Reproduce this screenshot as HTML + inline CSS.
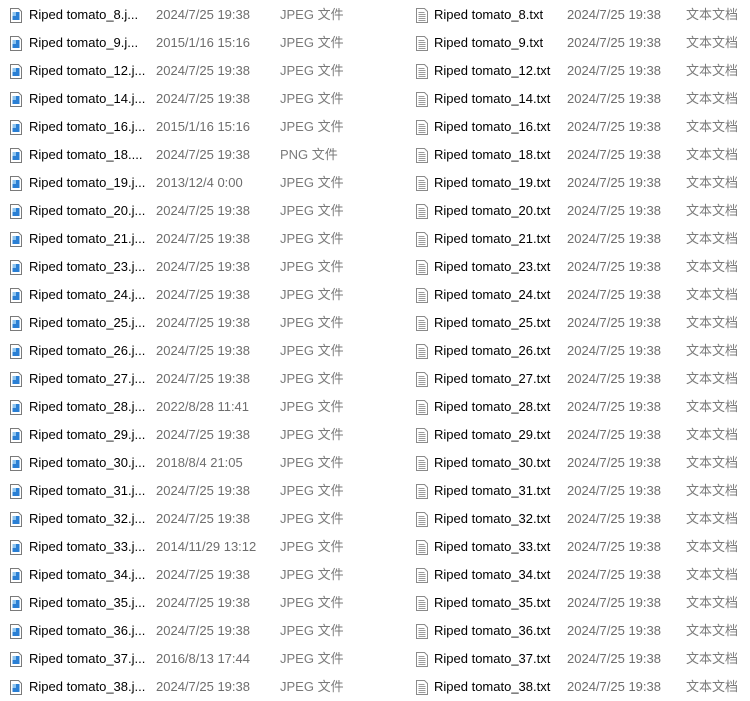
<!DOCTYPE html><html><head><meta charset="utf-8"><style>
body{margin:0;width:750px;height:699px;background:#fff;overflow:hidden;font-family:"Liberation Sans","Noto Sans CJK SC",sans-serif;font-size:13px;position:relative}
.r{position:absolute;left:0;width:750px;height:28px;line-height:28px}
.r span{position:absolute;top:0;white-space:nowrap}
.n{color:#000}.g{color:#6d6d6d}.c{color:#7a7a7a}
.ic{position:absolute;top:7px}
</style></head><body>
<script>
const L=[["8","2024/7/25 19:38","JPEG"],["9","2015/1/16 15:16","JPEG"],["12","2024/7/25 19:38","JPEG"],["14","2024/7/25 19:38","JPEG"],["16","2015/1/16 15:16","JPEG"],["18","2024/7/25 19:38","PNG"],["19","2013/12/4 0:00","JPEG"],["20","2024/7/25 19:38","JPEG"],["21","2024/7/25 19:38","JPEG"],["23","2024/7/25 19:38","JPEG"],["24","2024/7/25 19:38","JPEG"],["25","2024/7/25 19:38","JPEG"],["26","2024/7/25 19:38","JPEG"],["27","2024/7/25 19:38","JPEG"],["28","2022/8/28 11:41","JPEG"],["29","2024/7/25 19:38","JPEG"],["30","2018/8/4 21:05","JPEG"],["31","2024/7/25 19:38","JPEG"],["32","2024/7/25 19:38","JPEG"],["33","2014/11/29 13:12","JPEG"],["34","2024/7/25 19:38","JPEG"],["35","2024/7/25 19:38","JPEG"],["36","2024/7/25 19:38","JPEG"],["37","2016/8/13 17:44","JPEG"],["38","2024/7/25 19:38","JPEG"]];
const img='<svg class="ic" style="left:10px" width="12" height="15" viewBox="0 0 12 15"><path d="M.5 .5h8l3 3v11H.5z" fill="#fff" stroke="#7a7a7a"/><rect x="2.5" y="4" width="7" height="8" fill="#2a7fd4"/><rect x="2.5" y="4" width="3.5" height="4" fill="#8cc4f0"/></svg>';
const txt='<svg class="ic" style="left:416px" width="12" height="15" viewBox="0 0 12 15"><path d="M.5 .5h8l3 3v11H.5z" fill="#fff" stroke="#8a8a8a"/><path d="M2.5 4.5h6M2.5 6.5h7M2.5 8.5h7M2.5 10.5h7M2.5 12.5h7" stroke="#9a9a9a"/></svg>';
let h='';
L.forEach((d,i)=>{const t=i*28+1;
const name=d[2]=="PNG"?"Riped tomato_"+d[0]+"....":"Riped tomato_"+d[0]+".j...";
h+=`<div class="r" style="top:${t}px">${img}<span class="n" style="left:29px">${name}</span><span class="g" style="left:156px">${d[1]}</span><span class="c" style="left:280px">${d[2]} 文件</span>${txt}<span class="n" style="left:434px">Riped tomato_${d[0]}.txt</span><span class="g" style="left:567px">2024/7/25 19:38</span><span class="c" style="left:686px">文本文档</span></div>`;});
document.write(h);
</script>
</body></html>
